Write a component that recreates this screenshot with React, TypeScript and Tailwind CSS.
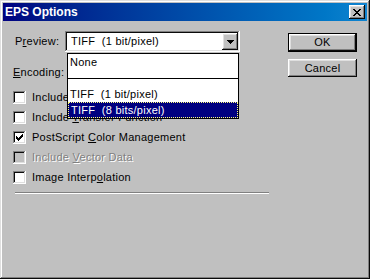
const FIELD = 'shadow-[inset_-1px_-1px_0_#ffffff,inset_1px_1px_0_#808080,inset_-2px_-2px_0_#dfdfdf,inset_2px_2px_0_#0a0a0a]'
const RAISED = 'shadow-[inset_-1px_-1px_0_#0a0a0a,inset_1px_1px_0_#ffffff,inset_-2px_-2px_0_#808080,inset_2px_2px_0_#dfdfdf]'

function Pixels({ rows, w, h }: { rows: string[]; w: number; h: number }) {
  return (
    <svg width={w} height={h} viewBox={`0 0 ${w} ${h}`} shapeRendering="crispEdges">
      {rows.map((r, y) =>
        r.split('').map((c, x) => (c === 'X' ? <rect key={`${x}-${y}`} x={x} y={y} width={1} height={1} fill="#000" /> : null))
      )}
    </svg>
  )
}

const CLOSE = ['XX....XX', '.XX..XX.', '..XXXX..', '...XX...', '..XXXX..', '.XX..XX.', 'XX....XX']
const ARROW = ['XXXXXXX', '.XXXXX.', '..XXX..', '...X...']
const CHECK = ['......X', '.....XX', 'X...XXX', 'XX.XXX.', 'XXXXX..', '.XXX...', '..X....']

function Checkbox({ label, checked, disabled }: { label: React.ReactNode; checked?: boolean; disabled?: boolean }) {
  return (
    <div className="h-[20px] flex items-center">
      <div className={`w-[13px] h-[13px] flex items-center justify-center ${FIELD} ${disabled ? 'bg-[#c0c0c0]' : 'bg-white'}`}>
        {checked && <Pixels rows={CHECK} w={7} h={7} />}
      </div>
      <span className={`ml-[6px] whitespace-pre ${disabled ? 'text-[#808080] [text-shadow:1px_1px_0_#ffffff]' : ''}`}>{label}</span>
    </div>
  )
}

export default function App() {
  return (
    <div className={`w-[370px] h-[279px] bg-[#c0c0c0] p-[3px] flex flex-col font-['Liberation_Sans',Arial,sans-serif] text-[11px] tracking-[0.25px] text-black shadow-[inset_-1px_-1px_0_#0a0a0a,inset_1px_1px_0_#dfdfdf,inset_-2px_-2px_0_#808080,inset_2px_2px_0_#ffffff]`}>
      {/* title bar */}
      <div className="h-[18px] flex items-center bg-linear-to-r from-[#000080] to-[#1084d0] pl-[2px] pr-[2px]">
        <span className="flex-1 text-white font-bold text-[12px] tracking-[0px]">EPS Options</span>
        <div className={`w-[16px] h-[14px] bg-[#c0c0c0] flex items-center justify-center ${RAISED}`}>
          <Pixels rows={CLOSE} w={8} h={7} />
        </div>
      </div>

      <div className="flex-1 flex">
        {/* left column */}
        <div className="w-[275px] pl-[10px] pt-[10px] flex flex-col">
          <div className="h-[21px] flex items-center">
            <span className="w-[52px] pl-[2px]">P<u>r</u>eview:</span>
            <div className={`relative w-[175px] h-[21px] bg-white flex items-center p-[2px] ${FIELD}`}>
              <span className="flex-1 pl-[4px] whitespace-pre">TIFF  (1 bit/pixel)</span>
              <div className={`w-[16px] h-[17px] bg-[#c0c0c0] flex items-center justify-center ${RAISED}`}>
                <Pixels rows={ARROW} w={7} h={4} />
              </div>
              {/* open list */}
              <div className="absolute top-[22px] left-[2px] w-[172px] border border-black bg-white z-10 flex flex-col">
                <div className="h-[16px] flex items-center pl-[2px] whitespace-pre">None</div>
                <div className="h-[16px] flex items-center">
                  <div className="w-full h-px bg-black" />
                </div>
                <div className="h-[16px] flex items-center pl-[2px] whitespace-pre">TIFF  (1 bit/pixel)</div>
                <div className="h-[16px] flex items-center pl-[2px] whitespace-pre bg-[#000080] text-white border border-dotted border-[#ffff7f]">TIFF  (8 bits/pixel)</div>
              </div>
            </div>
          </div>

          <div className="mt-[10px] h-[21px] flex items-center">
            <span><u>E</u>ncoding:</span>
          </div>

          <div className="mt-[4px] flex flex-col">
            <Checkbox label={<>Include <u>H</u>alftone Screen</>} />
            <Checkbox label={<>Include <u>T</u>ransfer Function</>} />
            <Checkbox checked label={<>PostScript <u>C</u>olor Management</>} />
            <Checkbox disabled label={<>Include <u>V</u>ector Data</>} />
            <Checkbox label={<>Image Interp<u>o</u>lation</>} />
          </div>

          <div className="mt-[5px] ml-[2px] w-[254px] border-t border-t-[#808080] border-b border-b-white" />
        </div>

        {/* right column */}
        <div className="flex-1 flex flex-col items-end pr-[10px] pt-[12px]">
          <div className="w-[69px] h-[19px] border border-black">
            <div className={`w-full h-full bg-[#c0c0c0] flex items-center justify-center ${RAISED}`}>OK</div>
          </div>
          <div className={`mt-[7px] w-[69px] h-[18px] bg-[#c0c0c0] flex items-center justify-center ${RAISED}`}>Cancel</div>
        </div>
      </div>
    </div>
  )
}
